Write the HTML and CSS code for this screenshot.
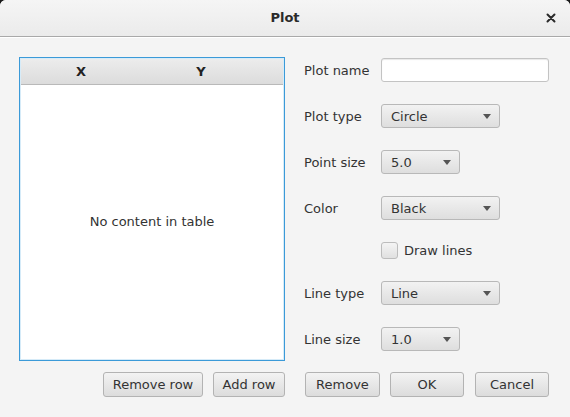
FILE: index.html
```html
<!DOCTYPE html>
<html>
<head>
<meta charset="utf-8">
<link rel="stylesheet" href="styles.css">
</head>
<body>
<div class="dialog">
  <div class="titlebar">
    <span class="title">Plot</span>
    <span class="close"><svg width="10" height="10" viewBox="0 0 10 10"><path d="M1.5 1.5 L8.5 8.5 M8.5 1.5 L1.5 8.5" stroke="#2a2a2a" stroke-width="2" stroke-linecap="round"/></svg></span>
  </div>
  <div class="content">
    <div class="table">
      <div class="thead">
        <div class="th">X</div>
        <div class="th">Y</div>
        <div class="th filler"></div>
      </div>
      <div class="tbody">No content in table</div>
    </div>
    <div class="form">
      <label class="lbl">Plot name</label>
      <div class="field"><input class="textfield" type="text"></div>

      <label class="lbl">Plot type</label>
      <div class="field"><div class="combo wide"><span>Circle</span><i class="arrow"></i></div></div>

      <label class="lbl">Point size</label>
      <div class="field"><div class="combo narrow"><span>5.0</span><i class="arrow"></i></div></div>

      <label class="lbl">Color</label>
      <div class="field"><div class="combo wide"><span>Black</span><i class="arrow"></i></div></div>

      <div></div>
      <div class="field check-row"><span class="checkbox"></span><span class="check-label">Draw lines</span></div>

      <label class="lbl">Line type</label>
      <div class="field"><div class="combo wide"><span>Line</span><i class="arrow"></i></div></div>

      <label class="lbl">Line size</label>
      <div class="field"><div class="combo narrow"><span>1.0</span><i class="arrow"></i></div></div>
    </div>
    <div class="buttons left-buttons">
      <button class="btn w100">Remove row</button>
      <button class="btn w72">Add row</button>
    </div>
    <div class="buttons right-buttons">
      <button class="btn w75">Remove</button>
      <button class="btn w74">OK</button>
      <button class="btn w74">Cancel</button>
    </div>
  </div>
</div>
</body>
</html>
```
FILE: styles.css
```css
* { box-sizing: border-box; }
html, body {
  margin: 0;
  padding: 0;
  background: #1a1a1a;
  width: 570px;
  height: 417px;
  overflow: hidden;
}
.dialog {
  width: 570px;
  height: 417px;
  background: #f4f4f4;
  border-radius: 6px 6px 0 0;
  overflow: hidden;
  font-family: "DejaVu Sans", "Liberation Sans", sans-serif;
  font-size: 13px;
  color: #333;
  display: flex;
  flex-direction: column;
}
.titlebar {
  height: 37px;
  flex: none;
  position: relative;
  display: flex;
  align-items: center;
  justify-content: center;
  background: linear-gradient(#f5f5f5, #ebebeb);
  border-bottom: 1px solid #a9a9a9;
  box-shadow: 0 1px 0 #ffffff;
}
.title {
  font-weight: bold;
  color: #2a2a2a;
  font-size: 13px;
  margin-top: -1px;
}
.close {
  position: absolute;
  right: 14px;
  top: 13px;
  width: 10px;
  height: 10px;
  display: flex;
}
.content {
  padding: 20px 20px 0 19px;
  display: grid;
  grid-template-columns: 266px 246px;
  grid-template-rows: 304px 25px;
  column-gap: 19px;
  row-gap: 11px;
}
.table {
  border: 1px solid #3b9ad8;
  box-shadow: inset 0 0 0 1px #d6ebf8;
  background: #fff;
  display: flex;
  flex-direction: column;
  padding: 1px;
}
.thead {
  height: 26px;
  display: flex;
  background: linear-gradient(#ececec, #dcdcdc);
  border-bottom: 1px solid #b9b9b9;
}
.th {
  width: 120px;
  display: flex;
  align-items: center;
  justify-content: center;
  font-weight: bold;
  color: #222;
}
.th.filler { flex: 1; width: auto; }
.tbody {
  flex: 1;
  display: flex;
  align-items: center;
  justify-content: center;
  color: #333;
  padding-bottom: 2px;
}
.form {
  display: grid;
  grid-template-columns: 77px auto;
  grid-template-rows: 24px 24px 24px 24px 17px 24px 24px;
  row-gap: 22px;
  padding-top: 1px;
  align-items: center;
}
.lbl {
  color: #333;
  white-space: nowrap;
}
.field { display: flex; align-items: center; }
.textfield {
  width: 168px;
  height: 24px;
  border: 1px solid #c3c3c3;
  border-radius: 3px;
  background: #fff;
  box-shadow: inset 0 1px 1px #e8e8e8;
  outline: none;
  margin: 0;
}
.combo {
  height: 24px;
  border: 1px solid #b8b8b8;
  border-radius: 3px;
  background: linear-gradient(#f2f2f2, #dedede);
  display: flex;
  align-items: center;
  justify-content: space-between;
  padding: 0 8px 0 9px;
  color: #333;
}
.combo.wide { width: 119px; }
.combo.narrow { width: 79px; }
.arrow {
  width: 0;
  height: 0;
  border-left: 4px solid transparent;
  border-right: 4px solid transparent;
  border-top: 5px solid #555;
  margin-top: 1px;
}
.check-row { gap: 6px; }
.checkbox {
  width: 17px;
  height: 17px;
  border: 1px solid #bcbcbc;
  border-radius: 3px;
  background: linear-gradient(#f4f4f4, #e0e0e0);
}
.check-label { color: #333; }
.buttons {
  display: flex;
  gap: 10px;
}
.left-buttons { justify-content: flex-end; padding-right: 0; }
.right-buttons { padding-left: 1px; gap: 10px; }
.btn {
  height: 25px;
  margin: 0;
  padding: 0;
  border: 1px solid #b3b3b3;
  border-radius: 3px;
  background: linear-gradient(#f3f3f3, #dcdcdc);
  font-family: "DejaVu Sans", "Liberation Sans", sans-serif;
  font-size: 13px;
  color: #333;
}
.w100 { width: 100px; }
.w72 { width: 72px; }
.w75 { width: 75px; }
.w74 { width: 74px; }
.right-buttons .btn.w74:last-child { margin-left: 1px; }
```
